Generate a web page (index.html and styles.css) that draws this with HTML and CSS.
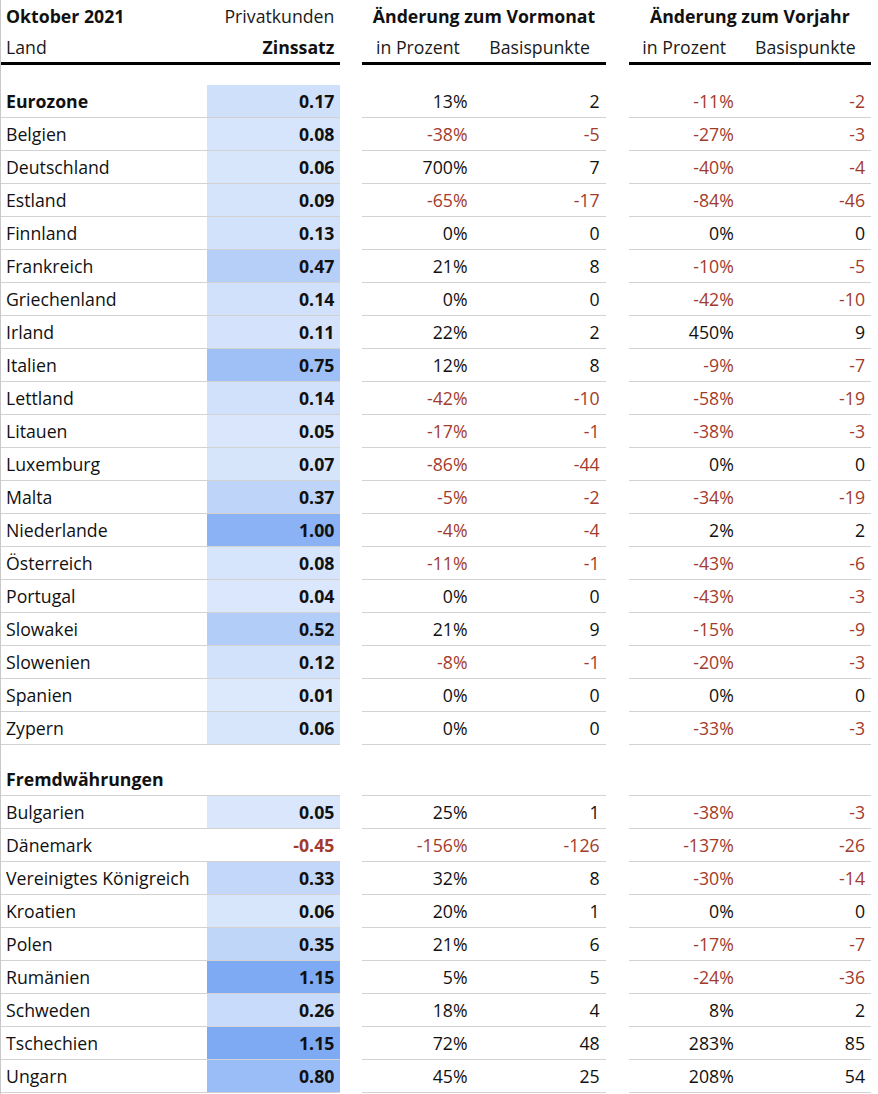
FILE: index.html
```html
<!DOCTYPE html>
<html lang="de">
<head>
<meta charset="utf-8">
<title>Zinssätze Oktober 2021</title>
<link rel="stylesheet" href="styles.css">
</head>
<body>
<div class="page">
<table class="rates">
  <colgroup>
    <col class="c-land"><col class="c-zins"><col class="c-gap1">
    <col class="c-pct"><col class="c-bp1"><col class="c-gap2">
    <col class="c-pct"><col class="c-bp2">
  </colgroup>
  <thead>
    <tr class="h1">
      <th class="land bold">Oktober 2021</th>
      <th class="num normal">Privatkunden</th>
      <th class="gap"></th>
      <th class="center bold" colspan="2">Änderung zum Vormonat</th>
      <th class="gap"></th>
      <th class="center bold" colspan="2">Änderung zum Vorjahr</th>
    </tr>
    <tr class="h2">
      <th class="land normal">Land</th>
      <th class="num bold">Zinssatz</th>
      <th class="gap"></th>
      <th class="center normal">in Prozent</th>
      <th class="center normal">Basispunkte</th>
      <th class="gap"></th>
      <th class="center normal">in Prozent</th>
      <th class="center normal">Basispunkte</th>
    </tr>
    <tr class="spacer"><td colspan="8"></td></tr>
  </thead>
  <tbody>
    <tr class="row first"><td class="land bold">Eurozone</td><td class="zins" style="background:#cfe0fb">0.17</td><td class="gap"></td><td class="num">13%</td><td class="num">2</td><td class="gap"></td><td class="num neg">-11%</td><td class="num neg">-2</td></tr>
    <tr class="row"><td class="land">Belgien</td><td class="zins" style="background:#d6e5fb">0.08</td><td class="gap"></td><td class="num neg">-38%</td><td class="num neg">-5</td><td class="gap"></td><td class="num neg">-27%</td><td class="num neg">-3</td></tr>
    <tr class="row"><td class="land">Deutschland</td><td class="zins" style="background:#d8e6fc">0.06</td><td class="gap"></td><td class="num">700%</td><td class="num">7</td><td class="gap"></td><td class="num neg">-40%</td><td class="num neg">-4</td></tr>
    <tr class="row"><td class="land">Estland</td><td class="zins" style="background:#d6e4fb">0.09</td><td class="gap"></td><td class="num neg">-65%</td><td class="num neg">-17</td><td class="gap"></td><td class="num neg">-84%</td><td class="num neg">-46</td></tr>
    <tr class="row"><td class="land">Finnland</td><td class="zins" style="background:#d2e2fb">0.13</td><td class="gap"></td><td class="num">0%</td><td class="num">0</td><td class="gap"></td><td class="num">0%</td><td class="num">0</td></tr>
    <tr class="row"><td class="land">Frankreich</td><td class="zins" style="background:#b6cff8">0.47</td><td class="gap"></td><td class="num">21%</td><td class="num">8</td><td class="gap"></td><td class="num neg">-10%</td><td class="num neg">-5</td></tr>
    <tr class="row"><td class="land">Griechenland</td><td class="zins" style="background:#d1e1fb">0.14</td><td class="gap"></td><td class="num">0%</td><td class="num">0</td><td class="gap"></td><td class="num neg">-42%</td><td class="num neg">-10</td></tr>
    <tr class="row"><td class="land">Irland</td><td class="zins" style="background:#d4e3fb">0.11</td><td class="gap"></td><td class="num">22%</td><td class="num">2</td><td class="gap"></td><td class="num">450%</td><td class="num">9</td></tr>
    <tr class="row"><td class="land">Italien</td><td class="zins" style="background:#9fc0f6">0.75</td><td class="gap"></td><td class="num">12%</td><td class="num">8</td><td class="gap"></td><td class="num neg">-9%</td><td class="num neg">-7</td></tr>
    <tr class="row"><td class="land">Lettland</td><td class="zins" style="background:#d1e1fb">0.14</td><td class="gap"></td><td class="num neg">-42%</td><td class="num neg">-10</td><td class="gap"></td><td class="num neg">-58%</td><td class="num neg">-19</td></tr>
    <tr class="row"><td class="land">Litauen</td><td class="zins" style="background:#d9e6fc">0.05</td><td class="gap"></td><td class="num neg">-17%</td><td class="num neg">-1</td><td class="gap"></td><td class="num neg">-38%</td><td class="num neg">-3</td></tr>
    <tr class="row"><td class="land">Luxemburg</td><td class="zins" style="background:#d7e5fb">0.07</td><td class="gap"></td><td class="num neg">-86%</td><td class="num neg">-44</td><td class="gap"></td><td class="num">0%</td><td class="num">0</td></tr>
    <tr class="row"><td class="land">Malta</td><td class="zins" style="background:#bed5f9">0.37</td><td class="gap"></td><td class="num neg">-5%</td><td class="num neg">-2</td><td class="gap"></td><td class="num neg">-34%</td><td class="num neg">-19</td></tr>
    <tr class="row"><td class="land">Niederlande</td><td class="zins" style="background:#8ab2f4">1.00</td><td class="gap"></td><td class="num neg">-4%</td><td class="num neg">-4</td><td class="gap"></td><td class="num">2%</td><td class="num">2</td></tr>
    <tr class="row"><td class="land">Österreich</td><td class="zins" style="background:#d6e5fb">0.08</td><td class="gap"></td><td class="num neg">-11%</td><td class="num neg">-1</td><td class="gap"></td><td class="num neg">-43%</td><td class="num neg">-6</td></tr>
    <tr class="row"><td class="land">Portugal</td><td class="zins" style="background:#dae7fc">0.04</td><td class="gap"></td><td class="num">0%</td><td class="num">0</td><td class="gap"></td><td class="num neg">-43%</td><td class="num neg">-3</td></tr>
    <tr class="row"><td class="land">Slowakei</td><td class="zins" style="background:#b2cdf8">0.52</td><td class="gap"></td><td class="num">21%</td><td class="num">9</td><td class="gap"></td><td class="num neg">-15%</td><td class="num neg">-9</td></tr>
    <tr class="row"><td class="land">Slowenien</td><td class="zins" style="background:#d3e2fb">0.12</td><td class="gap"></td><td class="num neg">-8%</td><td class="num neg">-1</td><td class="gap"></td><td class="num neg">-20%</td><td class="num neg">-3</td></tr>
    <tr class="row"><td class="land">Spanien</td><td class="zins" style="background:#dce8fc">0.01</td><td class="gap"></td><td class="num">0%</td><td class="num">0</td><td class="gap"></td><td class="num">0%</td><td class="num">0</td></tr>
    <tr class="row"><td class="land">Zypern</td><td class="zins" style="background:#d8e6fc">0.06</td><td class="gap"></td><td class="num">0%</td><td class="num">0</td><td class="gap"></td><td class="num neg">-33%</td><td class="num neg">-3</td></tr>
    <tr class="section"><td class="land bold">Fremdwährungen</td><td></td><td class="gap"></td><td></td><td></td><td class="gap"></td><td></td><td></td></tr>
    <tr class="row"><td class="land">Bulgarien</td><td class="zins" style="background:#d9e6fc">0.05</td><td class="gap"></td><td class="num">25%</td><td class="num">1</td><td class="gap"></td><td class="num neg">-38%</td><td class="num neg">-3</td></tr>
    <tr class="row"><td class="land">Dänemark</td><td class="zins neg">-0.45</td><td class="gap"></td><td class="num neg">-156%</td><td class="num neg">-126</td><td class="gap"></td><td class="num neg">-137%</td><td class="num neg">-26</td></tr>
    <tr class="row"><td class="land">Vereinigtes Königreich</td><td class="zins" style="background:#c2d7f9">0.33</td><td class="gap"></td><td class="num">32%</td><td class="num">8</td><td class="gap"></td><td class="num neg">-30%</td><td class="num neg">-14</td></tr>
    <tr class="row"><td class="land">Kroatien</td><td class="zins" style="background:#d8e6fc">0.06</td><td class="gap"></td><td class="num">20%</td><td class="num">1</td><td class="gap"></td><td class="num">0%</td><td class="num">0</td></tr>
    <tr class="row"><td class="land">Polen</td><td class="zins" style="background:#c0d6f9">0.35</td><td class="gap"></td><td class="num">21%</td><td class="num">6</td><td class="gap"></td><td class="num neg">-17%</td><td class="num neg">-7</td></tr>
    <tr class="row"><td class="land">Rumänien</td><td class="zins" style="background:#7eaaf3">1.15</td><td class="gap"></td><td class="num">5%</td><td class="num">5</td><td class="gap"></td><td class="num neg">-24%</td><td class="num neg">-36</td></tr>
    <tr class="row"><td class="land">Schweden</td><td class="zins" style="background:#c8dbfa">0.26</td><td class="gap"></td><td class="num">18%</td><td class="num">4</td><td class="gap"></td><td class="num">8%</td><td class="num">2</td></tr>
    <tr class="row"><td class="land">Tschechien</td><td class="zins" style="background:#7eaaf3">1.15</td><td class="gap"></td><td class="num">72%</td><td class="num">48</td><td class="gap"></td><td class="num">283%</td><td class="num">85</td></tr>
    <tr class="row"><td class="land">Ungarn</td><td class="zins" style="background:#9bbdf7">0.80</td><td class="gap"></td><td class="num">45%</td><td class="num">25</td><td class="gap"></td><td class="num">208%</td><td class="num">54</td></tr>
  </tbody>
</table>
</div>
</body>
</html>
```

FILE: styles.css
```css
html, body {
  margin: 0;
  padding: 0;
  background: #ffffff;
}

body {
  font-family: "Open Sans", "Liberation Sans", sans-serif;
  font-size: 17.7px;
  color: #111111;
}

.page {
  border-left: 1px solid #c8c8c8;
  min-height: 1094px;
  box-sizing: border-box;
}

.rates {
  border-collapse: separate;
  border-spacing: 0;
  table-layout: fixed;
  width: 870px;
}

.c-land { width: 206px; }
.c-zins { width: 133px; }
.c-gap1 { width: 22px; }
.c-pct { width: 111px; }
.c-bp1 { width: 132px; }
.c-gap2 { width: 23px; }
.c-bp2 { width: 131px; }

.rates th,
.rates td {
  padding: 0;
  white-space: nowrap;
  line-height: 24px;
}

.bold { font-weight: 700; }
.normal { font-weight: 400; }

.land {
  text-align: left;
  padding-left: 5px !important;
}

.num {
  text-align: right;
  padding-right: 6px !important;
}

.center { text-align: center; }

.h1 th {
  height: 31px;
  vertical-align: middle;
  color: #1a1a1a;
}

.h1 .bold { color: #111111; }

.h2 th {
  height: 28px;
  vertical-align: bottom;
  padding-bottom: 3px;
  border-bottom: 3px solid #000000;
  color: #1a1a1a;
}

.h2 .bold { color: #111111; }

.rates .h2 th.gap { border-bottom: 0; }

.spacer td { height: 20px; }

.row td {
  height: 32px;
  vertical-align: middle;
  border-bottom: 1px solid #d2d2d2;
}

.zins {
  text-align: right;
  font-weight: 700;
  padding-right: 6px !important;
}

.neg { color: #a23b2c; }

.section td {
  height: 46px;
  vertical-align: bottom;
  padding-bottom: 4px;
  border-bottom: 1px solid #d2d2d2;
}

.rates tr td.gap,
.rates tr th.gap {
  border-bottom: 0;
}
```
